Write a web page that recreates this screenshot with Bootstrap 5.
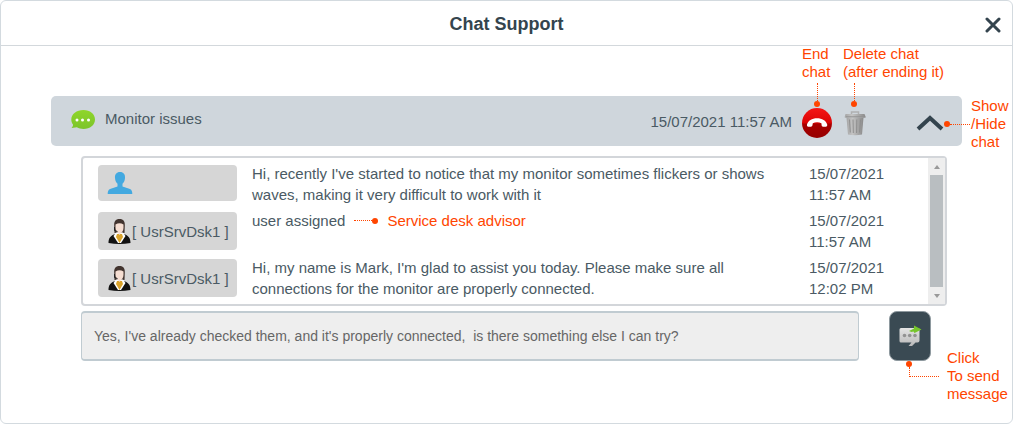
<!DOCTYPE html>
<html lang="en">
<head>
<meta charset="utf-8">
<meta name="viewport" content="width=device-width, initial-scale=1">
<title>Chat Support</title>
<link href="https://cdn.jsdelivr.net/npm/bootstrap@5.3.0/dist/css/bootstrap.min.css" rel="stylesheet">
<style>
  body { font-family: "Liberation Sans", Arial, sans-serif; font-size: 15px; line-height: 21px; color: #4a5a64; background: #fff; }
  svg { display: block; }
  .chat-window { border: 1px solid #d3dadf; border-radius: 6px; }
  .chat-head { height: 45px; padding-top: 2px; border-bottom: 1px solid #d3d8dc; }
  .chat-head h1 { font-size: 18px; line-height: 24px; color: #34444e; }
  .plain-btn { background: none; border: 0; padding: 0; }
  .close-btn { right: 11px; top: 16px; }
  .chat-body { padding: 50px 50px 16px; }
  .topic-bar { height: 50px; background: #cfd6dc; border-radius: 5px; padding: 4px 18px 0 19px; }
  .topic-icon { margin-bottom: 6px; }
  .topic-name { padding-bottom: 10px; margin-left: 9px; }
  .topic-time { padding-bottom: 4px; margin-right: 10px; }
  .toggle-wrap { margin-left: 50px; }
  .thread { padding: 10px 15px 0 30px; }
  .log { border: 2px solid #d3d6da; border-radius: 4px; }
  .log-list { padding: 5px 0 5px 15px; gap: 5px; }
  .sender { width: 139px; height: 38px; margin-top: 2px; background: #d6d6d6; border-radius: 4px; padding: 0 8px 0 9px; white-space: nowrap; }
  .sender svg { flex: none; }
  .sender-user { height: 36px; }
  .msg { padding: 0 32px 0 15px; }
  .when { width: 119px; padding-right: 24px; }
  .scroll-track { width: 17px; background: #eee; }
  .scroll-thumb { width: 13px; background: #b9bec1; }
  .scroll-arrow { height: 17px; padding-top: 7px; }
  .compose { margin-top: 5px; gap: 30px; padding-right: 16px; }
  .compose-input { height: 50px; font-size: 14px; color: #666; background: #eee; border: 1px solid #c0cbd1; border-width: 2px 1px; border-radius: 4px; padding: 0 12px; }
  .compose-input:focus { background: #eee; color: #666; }
  .send-btn { width: 42px; height: 50px; background: #3a4a53; border: 1px solid #8e999f; border-radius: 8px; padding: 0 0 0 9px; }
  /* Callouts that explain the controls */
  .note { color: #ff4500; line-height: 18px; white-space: nowrap; }
  .over { position: absolute; }
  .dot { width: 6px; height: 6px; border-radius: 50%; background: #ff4500; flex: none; }
  .lead-h { width: 18px; border-top: 1px dotted #ff4500; }
  .lead-v { height: 18px; border-left: 1px dotted #ff4500; }
  .note-top { bottom: 31px; left: 0; }
  .note-stem { margin-left: 12px; width: 6px; padding-top: 2px; }
  .note-delete { left: -1px; bottom: 29px; }
  .note-side { left: 28px; top: -18px; }
  .note-side .lead-h { width: 20px; margin-right: 1px; }
  .note-inline { height: 21px; margin-left: 9px; }
  .note-inline .dot { margin-right: 9px; }
  .note-send { left: 17px; top: 50px; }
  .elbow { width: 30px; height: 10px; margin-left: 3px; border: dotted #ff4500; border-width: 0 0 1px 1px; }
  .note-send-text { left: 58px; top: 38px; }
</style>
</head>
<body>
<main class="chat-window min-vh-100">
  <header class="chat-head position-relative d-flex align-items-center justify-content-center">
    <h1 class="fw-bold m-0">Chat Support</h1>
    <button type="button" class="plain-btn close-btn position-absolute" aria-label="Close">
      <svg width="16" height="16" viewBox="0 0 16 16" fill="none" stroke="#34444e" stroke-width="3" stroke-linecap="round"><path d="M2 2l12 12M14 2L2 14"/></svg>
    </button>
  </header>

  <div class="chat-body">
    <section class="topic-bar d-flex align-items-center">
      <svg class="topic-icon" width="26" height="22" viewBox="0 0 26 22"><defs><linearGradient id="g" x2="0" y2="1"><stop stop-color="#8fd62a"/><stop offset="1" stop-color="#7cc42b"/></linearGradient></defs><path fill="url(#g)" d="M13.500 1C20 1 25 5 25 10.500S20 20 13.500 20c-2.500 0-4.700-.6-6.600-1.700L1.500 19c1.200-1 1.600-2.200 1.500-3.400C1.900 14.100 1.300 12.400 1.300 10.500 1.300 5 6.600 1 13.500 1z"/><g fill="#fff"><circle cx="7" cy="11" r="1.500"/><circle cx="12.500" cy="11" r="1.500"/><circle cx="18.500" cy="11" r="1.500"/></g></svg>
      <span class="topic-name flex-grow-1">Monitor issues</span>
      <time class="topic-time">15/07/2021 11:57 AM</time>
      <div class="position-relative">
        <button type="button" class="plain-btn d-block" aria-label="End chat">
          <svg width="30" height="30" viewBox="0 0 30 30"><defs><linearGradient id="r" x2="0" y2="1"><stop stop-color="#f51515"/><stop offset=".48" stop-color="#dc0505"/><stop offset=".55" stop-color="#a80000"/><stop offset="1" stop-color="#960000"/></linearGradient></defs><circle cx="15" cy="15" r="15" fill="url(#r)"/><path fill="#fff" d="M5 16.500C6 12.500 10 10.200 15 10.200s9.200 2.300 10.200 6.300c.2 1.300-.3 2.200-1.300 2.300l-2.800-.1c-1-.2-1.400-.9-1.500-1.800l-.2-1.700c-2.600-1.200-6-1.200-8.600 0l-.3 1.700c-.2 1-.7 1.600-1.600 1.800l-2.600.1C5.200 18.700 4.800 17.800 5 16.500z"/></svg>
        </button>
        <div class="note over note-top">End<br>chat<div class="note-stem d-flex flex-column align-items-center"><span class="lead-v"></span><span class="dot"></span></div></div>
      </div>
      <div class="position-relative ms-2 ps-1">
        <button type="button" class="plain-btn d-block" aria-label="Delete chat">
          <svg width="22" height="26" viewBox="0 0 22 26"><defs><linearGradient id="t"><stop stop-color="#a5a5a5"/><stop offset=".35" stop-color="#c4c4c4"/><stop offset="1" stop-color="#8a8a8a"/></linearGradient></defs><path d="M7.500 4V2h7v2" fill="none" stroke="#b0b0b0" stroke-width="1.500"/><path fill="url(#t)" d="M1.500 4h19l1 2.500v1.200H.8V6.500z"/><path fill="url(#t)" d="M2.500 7.700h17L18 24.500q-7 1.500-14 0z"/><path d="M5.500 9.500l.8 13M9 9.500l.3 13.500M12.800 9.500L12.600 23M16.500 9.500l-.9 13" stroke="#8e8e8e"/><path d="M2 6.800h18" stroke="#929292"/></svg>
        </button>
        <div class="note over note-delete ms-1">Delete chat<br>(after ending it)<div class="note-stem ms-2 d-flex flex-column align-items-center"><span class="lead-v"></span><span class="dot"></span></div></div>
      </div>
      <div class="position-relative toggle-wrap">
        <button type="button" class="plain-btn d-block" aria-label="Show or hide chat">
          <svg width="28" height="16" viewBox="0 0 28 16" fill="none" stroke="#34444e" stroke-width="4"><path d="M2 14L14 3l12 11"/></svg>
        </button>
        <div class="note over note-side d-flex align-items-center"><span class="dot"></span><span class="lead-h"></span><span>Show<br>/Hide<br>chat</span></div>
      </div>
    </section>

    <svg width="0" height="0" class="position-absolute" aria-hidden="true">
      <symbol id="advisor" viewBox="0 0 24 26">
        <path fill="#42342f" d="M12 1c4 0 5.500 2.500 5.300 6.500L17 15H7L6.700 7.500C6.500 3.500 8 1 12 1z"/>
        <path fill="#f6ded2" d="M8 6.500q4-2.500 8 0V10c0 3-1.800 5-4 5s-4-2-4-5z"/>
        <path fill="#111" d="M1 25c0-5 2-7.500 7-9l4 4 4-4c5 1.500 7 4 7 9q-11 2-22 0z"/>
        <path fill="#fff" d="M8.500 14.500h7L18 18l-4.500 7h-3L6 18z"/>
        <path fill="#d9a32c" d="M9.500 16h5l1 3-3.500 6-3.500-6z"/>
        <path fill="#f6ded2" d="M9.800 14h4.400L12 17z"/>
        <path fill="none" stroke="#222" d="M7 9v3.500l3 1"/>
      </symbol>
    </svg>

    <div class="thread">
      <section class="log d-flex" aria-label="Messages">
        <ul class="log-list list-unstyled d-flex flex-column flex-grow-1 m-0">
          <li class="d-flex">
            <div class="sender sender-user d-flex align-items-center flex-shrink-0">
              <svg width="26" height="24" viewBox="0 0 26 24"><path fill="#43a9e0" d="M13 1c3.500 0 5.300 2.500 5 6-.2 2.800-1.200 4.500-2.500 5.800v2.700l7.500 2.600c1.800.8 2.300 2.600 2.300 4.900H.7c0-2.300.5-4.100 2.300-4.900l7.500-2.600v-2.700C9.200 11.500 8.200 9.800 8 7c-.3-3.500 1.500-6 5-6z"/></svg>
            </div>
            <div class="msg flex-grow-1">Hi, recently I've started to notice that my monitor sometimes flickers or shows waves, making it very difficult to work with it</div>
            <time class="when flex-shrink-0">15/07/2021 11:57 AM</time>
          </li>
          <li class="d-flex">
            <div class="sender d-flex align-items-center flex-shrink-0"><svg width="25" height="26"><use href="#advisor"/></svg>[ UsrSrvDsk1 ]</div>
            <div class="msg flex-grow-1 d-flex align-items-start">user assigned
              <span class="note note-inline d-flex align-items-center"><span class="lead-h"></span><span class="dot"></span>Service desk advisor</span>
            </div>
            <time class="when flex-shrink-0">15/07/2021 11:57 AM</time>
          </li>
          <li class="d-flex">
            <div class="sender d-flex align-items-center flex-shrink-0"><svg width="25" height="26"><use href="#advisor"/></svg>[ UsrSrvDsk1 ]</div>
            <div class="msg flex-grow-1">Hi, my name is Mark, I'm glad to assist you today. Please make sure all connections for the monitor are properly connected.</div>
            <time class="when flex-shrink-0">15/07/2021 12:02 PM</time>
          </li>
        </ul>
        <div class="scroll-track flex-shrink-0 d-flex flex-column align-items-center" aria-hidden="true">
          <div class="scroll-arrow"><svg width="6" height="4"><path fill="#999" d="M0 4l3-4 3 4z"/></svg></div>
          <div class="scroll-thumb flex-grow-1"></div>
          <div class="scroll-arrow"><svg width="6" height="4"><path fill="#999" d="M0 0h6L3 4z"/></svg></div>
        </div>
      </section>

      <form class="compose d-flex">
        <input type="text" class="form-control compose-input" aria-label="Message" value="Yes, I've already checked them, and it's properly connected,  is there something else I can try?">
        <div class="position-relative">
          <button type="button" class="send-btn d-block" aria-label="Send message">
            <svg width="24" height="24" viewBox="0 0 24 24"><defs><linearGradient id="m" x2="0" y2="1"><stop stop-color="#e4e4e4"/><stop offset="1" stop-color="#b9b9b9"/></linearGradient></defs><path fill="url(#m)" d="M2 4h17q1.500 0 1.500 1.500v11q0 2-2 2h-2L13 22H9.500l3-3.500H2q-1.500 0-1.500-1.500V5.500Q.5 4 2 4z"/><g fill="#929292"><circle cx="5.500" cy="11.500" r="1.800"/><circle cx="10.700" cy="11.500" r="1.800"/><circle cx="16" cy="11.500" r="1.800"/></g><path fill="#76c52c" d="M10 7l5-2.500V1.500l7.500 4-7 3.500-1-1.500-2 .5z"/></svg>
          </button>
          <div class="over note-send"><div class="dot"></div><div class="elbow"></div></div>
          <div class="note over note-send-text">Click<br>To send<br>message</div>
        </div>
      </form>
    </div>
  </div>
</main>
<script src="https://cdn.jsdelivr.net/npm/bootstrap@5.3.0/dist/js/bootstrap.bundle.min.js"></script>
</body>
</html>
